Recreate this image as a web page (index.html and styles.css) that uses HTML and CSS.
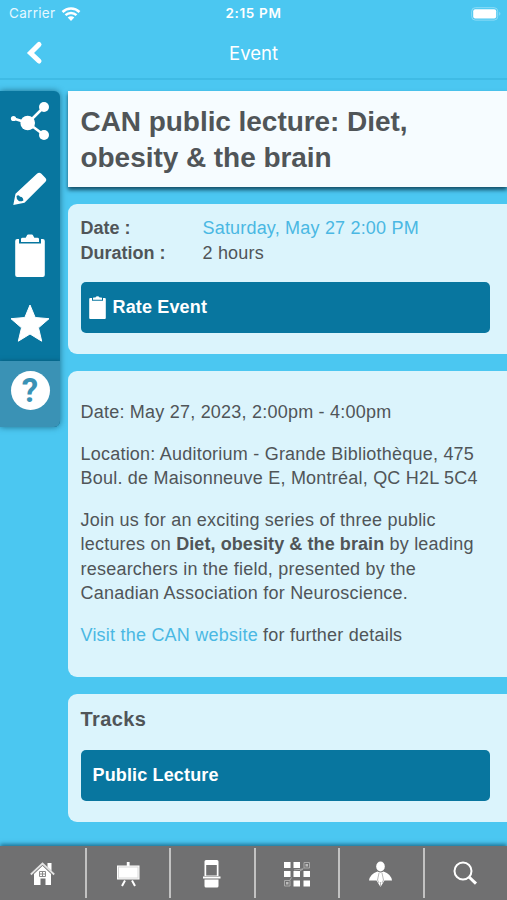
FILE: index.html
```
<!DOCTYPE html>
<html lang="en">
<head>
  <meta charset="UTF-8">
  <title>Event</title>
  <link rel="stylesheet" href="styles.css">
</head>
<body>
  <header>
    <div class="status">
      <div class="carrier">
        <span>Carrier</span>
        <svg width="20" height="16" viewBox="0 0 20 16">
          <path d="M1.500 6a12.200 12.200 0 0 1 17 0M4.500 9.200a8 8 0 0 1 11 0" fill="none" stroke="#fff" stroke-width="2.500"/>
          <path d="M6.700 11.500a4.700 4.700 0 0 1 6.600 0L10 15z" fill="#fff"/>
        </svg>
      </div>
      <span class="time">2:15 PM</span>
      <svg class="battery" width="31" height="14" viewBox="0 0 31 14">
        <rect x=".7" y=".7" width="26" height="12.400" rx="3.600" fill="none" stroke="#8cdcf6"/>
        <rect x="2.200" y="2.200" width="23" height="9.400" rx="2" fill="#fff"/>
        <path d="M28.200 4.800q2.400 2 0 4z" fill="#8cdcf6"/>
      </svg>
    </div>
    <div class="navbar">
      <a class="back" href="#">
        <svg width="18" height="26" viewBox="0 0 18 26"><path d="M14 4.500L5.500 13l8.500 8" fill="none" stroke="#fff" stroke-width="5" stroke-linecap="round"/></svg>
      </a>
      <span class="nav-title">Event</span>
    </div>
  </header>

  <div class="page">
    <nav class="sidebar">
      <a href="#">
        <svg width="40" height="40" viewBox="0 0 40 40">
          <path d="M3.500 17.500L18 22L34 6M18 22l16 12" fill="none" stroke="#fff" stroke-width="2.600"/>
          <g fill="#fff"><circle cx="3.500" cy="17.500" r="2.600"/><circle cx="17.700" cy="22" r="7.300"/><circle cx="34" cy="6" r="5"/><circle cx="34" cy="34" r="5"/></g>
        </svg>
      </a>
      <a href="#">
        <svg width="40" height="40" viewBox="0 0 40 40">
          <path d="M3.300 37L5.500 25.800L27.200 5.500q2-1.800 4.200.2l4.300 4.500q1.500 1.900-.2 3.600L14.500 34.800z" fill="#fff"/>
          <path d="M6.500 28q2.200-1.800 3.600.8 2.800-.3 3.300 3.600-3 1.700-4.900.3-2.200-1.400-2-4.700z" fill="#08769f"/>
        </svg>
      </a>
      <a href="#">
        <svg width="40" height="46" viewBox="0 0 40 46">
          <path d="M7.200 6H9v4.500h22V6h1.800q2 0 2 2v34q0 2-2 2H7.200q-2 0-2-2V8q0-2 2-2z" fill="#fff"/>
          <path d="M11 9V6.200q0-1.400 1.500-1.400h3.200l1.200-2.400q.4-.9 1.300-.9h3.600q.9 0 1.300.9l1.200 2.400h3.200q1.500 0 1.500 1.400V9z" fill="#fff"/>
        </svg>
      </a>
      <a href="#">
        <svg width="40" height="40" viewBox="0 0 40 40"><path d="M20 2l5.200 12.500L39 15.700 28.500 24.800 31.700 38.200 20 31 8.300 38.200 11.500 24.800 1 15.700l13.800-1.200z" fill="#fff" stroke="#fff" stroke-linejoin="round"/></svg>
      </a>
      <a class="help" href="#"><span>?</span></a>
    </nav>

    <main>
      <h1>CAN public lecture: Diet,<br>obesity &amp; the brain</h1>

      <section class="card info">
        <dl>
          <dt>Date :</dt><dd class="link">Saturday, May 27 2:00 PM</dd>
          <dt>Duration :</dt><dd>2 hours</dd>
        </dl>
        <a class="button rate" href="#">
          <svg width="17" height="24" viewBox="0 0 17 24">
            <path d="M1.200 2H3v2.700h11V2h1.800q1 0 1 1v19q0 1-1 1H1.200q-1 0-1-1V3q0-1 1-1z" fill="#fff"/>
            <path d="M4 3.800V2.200q0-.6.700-.6h1.700Q7 .2 8.500.2t2.100 1.400h1.700q.7 0 .7.600v1.600z" fill="#fff"/>
          </svg>
          Rate Event
        </a>
      </section>

      <section class="card details">
        <p>Date: May 27, 2023, 2:00pm - 4:00pm</p>
        <p>Location: Auditorium - Grande Bibliothèque, 475<br>Boul. de Maisonneuve E, Montréal, QC H2L 5C4</p>
        <p>Join us for an exciting series of three public<br>lectures on <b>Diet, obesity &amp; the brain</b> by leading<br>researchers in the field, presented by the<br>Canadian Association for Neuroscience.</p>
        <p><a class="link" href="#">Visit the CAN website</a> for further details</p>
      </section>

      <section class="card tracks">
        <h2>Tracks</h2>
        <a class="button" href="#">Public Lecture</a>
      </section>
    </main>
  </div>

  <footer>
    <a href="#">
      <svg width="28" height="28" viewBox="0 0 28 28">
        <path d="M19.500 3h4v8l-4-4z" fill="#fff"/>
        <path d="M6 13.500l8.500-8 8.500 8V25h-5.500v-6.500h-5V25H6z" fill="#fff"/>
        <path d="M2.800 14.500L14.500 3.500l11.700 11" fill="none" stroke="#e2e2e2" stroke-width="1.800"/>
        <path d="M5.500 14L14.500 5.600l9 8.400" fill="none" stroke="#858585" stroke-width=".8"/>
        <path d="M11.500 11.500h6v5h-6zM14.500 11.500v5M11.500 14h6" fill="none" stroke="#8a8a8a"/>
      </svg>
    </a>
    <a href="#">
      <svg width="28" height="28" viewBox="0 0 28 28">
        <path d="M12.800 2h2.800v4h-2.800zM3 5.500h22.500v14H3z" fill="#fff"/>
        <rect x="4.500" y="7" width="19.500" height="11" fill="none" stroke="#d8d8d8"/>
        <path d="M11 20.500l-3 5.500M18 20.500l3 5.500" stroke="#fff" stroke-width="2"/>
      </svg>
    </a>
    <a href="#">
      <svg width="28" height="30" viewBox="0 0 28 30">
        <path d="M8 1h11q1.500 0 1.500 1.500V17h-14V2.500Q6.500 1 8 1zM5 17.500h17.500v2H5zM6.500 20.500h14V27q0 1.500-1.500 1.500H8q-1.500 0-1.500-1.500z" fill="#fff"/>
        <path d="M8.200 6h10.600v10.500H8.200z" fill="#707071"/>
      </svg>
    </a>
    <a href="#">
      <svg width="28" height="28" viewBox="0 0 28 28">
        <path d="M1 2h6.500v6H1zM10.500 2H17v6h-6.500zM1 11h6.500v6H1zM10.500 11H17v6h-6.500zM20.500 11H27v6h-6.500zM10.500 20.500H17v6h-6.500zM20.500 20.500H27v6h-6.500z" fill="#fff"/>
        <path d="M21 2.500h5.500V8H21zM1.500 20.500H7V26H1.500zM20.500 8.500L17 11M8.500 17.500L7 20M11 10l9-1" fill="none" stroke="#aaa"/>
        <path d="M22.500 4H25v2.500h-2.500zM3 22h2.500v2.500H3z" fill="#bbb"/>
      </svg>
    </a>
    <a href="#">
      <svg width="28" height="28" viewBox="0 0 28 28">
        <ellipse cx="13.500" cy="6.500" rx="4.300" ry="5" fill="#fff"/>
        <path d="M10.500 11.500q3 2 6 0 7.500 2.500 8.500 9h-7.500L13.500 27l-4-6.500H2q1-6.500 8.500-9z" fill="#fff"/>
        <path d="M12 13l-1.500 7 1.500 3M15 13l1.500 7-1.500 3M13.500 22v5" fill="none" stroke="#a5a5a5" stroke-width=".8"/>
      </svg>
    </a>
    <a href="#">
      <svg width="28" height="28" viewBox="0 0 28 28">
        <circle cx="11" cy="11" r="8.500" fill="none" stroke="#fff" stroke-width="2"/>
        <path d="M17 17l7 6.700" stroke="#fff" stroke-width="3"/>
      </svg>
    </a>
  </footer>
</body>
</html>
```

FILE: styles.css
```
* {
  box-sizing: border-box;
}

body {
  margin: 0;
  height: 900px;
  display: flex;
  flex-direction: column;
  overflow: hidden;
  background: #4bc7f1;
  color: #505558;
  font-family: "Liberation Sans", Helvetica, Arial, sans-serif;
  font-size: 18px;
  line-height: 24.5px;
}

a {
  text-decoration: none;
}

svg {
  display: block;
  flex: none;
}

header {
  height: 80px;
  color: #fff;
  border-bottom: 2px solid #3fbbe5;
  font-family: Inter, "Liberation Sans", sans-serif;
}

.status {
  display: grid;
  grid-template-columns: 1fr auto 1fr;
  align-items: center;
  height: 27px;
  padding: 0 5px 0 9px;
  font-size: 13.5px;
}

.carrier {
  display: flex;
  align-items: center;
  gap: 6px;
  color: #e5f8ff;
  letter-spacing: .3px;
}

.time {
  font-weight: 600;
  font-size: 13.5px;
  letter-spacing: .65px;
  margin-right: 4px;
}

.battery {
  justify-self: end;
}

.navbar {
  display: grid;
  grid-template-columns: 1fr auto 1fr;
  align-items: center;
  height: 51px;
}

.back {
  padding-left: 25px;
}

.nav-title {
  padding-top: 2px;
  font-size: 18.5px;
}

.page {
  display: flex;
  align-items: flex-start;
  gap: 8px;
  height: 766px;
  padding-top: 11px;
}

.sidebar {
  width: 60px;
  height: 336px;
  display: flex;
  flex-direction: column;
  background: #08769f;
  border-radius: 0 6px 6px 0;
  box-shadow: 0 0 6px rgba(0, 50, 70, .6);
  overflow: hidden;
}

.sidebar a {
  height: 67.5px;
  padding-bottom: 8px;
  display: flex;
  align-items: center;
  justify-content: center;
}

.sidebar .help {
  height: 66px;
  padding-bottom: 7px;
  background: #3a92b5;
  box-shadow: 0 0 4px rgba(0, 50, 70, .5);
}

.help span {
  width: 39px;
  height: 39px;
  border-radius: 50%;
  background: #fff;
  color: #3a92b5;
  font-family: Roboto, "Liberation Sans", sans-serif;
  font-size: 33px;
  font-weight: bold;
  line-height: 39px;
  text-align: center;
}

main {
  flex: 1;
  white-space: nowrap;
}

h1 {
  height: 96px;
  margin: 0 0 17px;
  padding: 13px 12.5px;
  background: #f6fcff;
  box-shadow: 0 3px 4px rgba(0, 40, 60, .75);
  font-size: 28px;
  line-height: 35.5px;
  letter-spacing: -.05px;
}

.card {
  margin-bottom: 17px;
  padding: 12px 17px 0 12.5px;
  background: #dbf4fc;
  border-radius: 9px 0 0 9px;
}

.info {
  height: 150px;
}

.details {
  height: 305.5px;
  padding-top: 29px;
  letter-spacing: .22px;
}

.details b {
  letter-spacing: .08px;
}

.tracks {
  height: 128px;
}

dl {
  display: grid;
  grid-template-columns: 122px 1fr;
  margin: 0 0 17px;
}

dt {
  font-weight: bold;
}

dd {
  margin: 0;
  letter-spacing: .19px;
}

.link {
  color: #4ab8e3;
}

.button {
  display: flex;
  align-items: center;
  height: 51px;
  padding: 0 12px;
  background: #08769f;
  border-radius: 5px;
  color: #fff;
  font-weight: bold;
  letter-spacing: .15px;
}

.rate {
  padding-left: 8px;
  gap: 7px;
}

p {
  margin: 0 0 17px;
}

h2 {
  margin: 0 0 18px;
  padding-top: 1px;
  font-size: 20px;
  line-height: 25px;
  letter-spacing: .4px;
}

footer {
  height: 54px;
  display: grid;
  grid-template-columns: repeat(6, 1fr);
  padding: 2px 0;
  background: #707071;
  box-shadow: 0 -2px 4px rgba(0, 60, 90, .6);
}

footer a {
  display: flex;
  align-items: center;
  justify-content: center;
  padding-top: 2px;
}

footer a + a {
  border-left: 2px solid #c2c2c2;
}
```
